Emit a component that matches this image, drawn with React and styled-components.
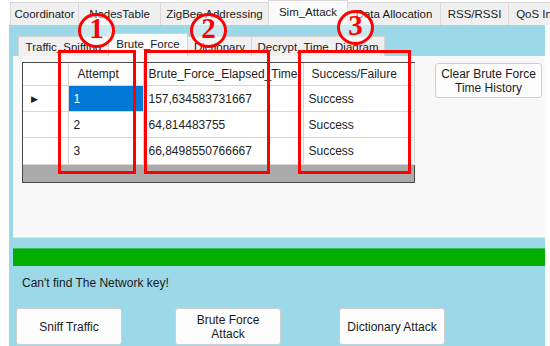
import React from "react";
import styled, { createGlobalStyle } from "styled-components";

const GlobalStyle = createGlobalStyle`
  body {
    margin: 0;
    background: #ffffff;
    font-family: "Liberation Sans", Arial, sans-serif;
    color: #1a1a1a;
  }
`;

const Screen = styled.div`
  position: relative;
  width: 550px;
  height: 346px;
  overflow: hidden;
  background: #ffffff;
`;

const TopTabs = styled.div`
  display: flex;
  align-items: flex-end;
  height: 25px;
  padding-left: 10px;
`;

const TopTab = styled.div`
  box-sizing: border-box;
  flex: none;
  width: ${(p) => p.$w}px;
  height: ${(p) => (p.$active ? 25 : 23)}px;
  display: flex;
  align-items: center;
  justify-content: center;
  padding-bottom: ${(p) => (p.$active ? 3 : 0)}px;
  font-size: 11.5px;
  white-space: nowrap;
  overflow: hidden;
  background: ${(p) => (p.$active ? "#fbfbfb" : "#f0f0f0")};
  border: 1px solid #d9d9d9;
  border-bottom: none;
  margin-right: -1px;
`;

const Page = styled.div`
  margin-left: 9px;
  width: 536px;
  height: 321px;
  box-sizing: border-box;
  padding-left: 4px;
  background: #9bd8e8;
  display: flex;
  flex-direction: column;
`;

const InnerTabs = styled.div`
  display: flex;
  align-items: flex-end;
  height: 31px;
  padding-left: 5px;
`;

const InnerTab = styled.div`
  box-sizing: border-box;
  flex: none;
  width: ${(p) => p.$w}px;
  height: ${(p) => (p.$active ? 23 : 20)}px;
  display: flex;
  align-items: center;
  justify-content: center;
  padding-bottom: ${(p) => (p.$active ? 2 : 0)}px;
  font-size: 11.5px;
  white-space: nowrap;
  background: ${(p) => (p.$active ? "#fbfbfb" : "#f0f0f0")};
  border: 1px solid #d4d4d4;
  border-bottom: none;
  margin-right: -1px;
`;

const TabPage = styled.div`
  box-sizing: border-box;
  height: 182px;
  background: #f8f8f8;
  padding: 6px 0 0 9px;
  display: flex;
  align-items: flex-start;
  border-bottom: 1px solid #e4e4e4;
`;

const Grid = styled.div`
  box-sizing: border-box;
  width: 393px;
  height: 121px;
  border: 1px solid #4a4a4a;
  background: #ababab;
`;

const Table = styled.table`
  border-collapse: collapse;
  table-layout: fixed;
  width: 391px;
  font-size: 12px;
`;

const HeadCell = styled.th`
  height: 22px;
  padding: 0 0 0 ${(p) => p.$pad || 5}px;
  text-align: left;
  font-weight: normal;
  background: #ffffff;
  border-right: 1px solid #d6d6d6;
  border-bottom: 1px solid #d6d6d6;
  white-space: nowrap;
  overflow: hidden;
  color: #222;
`;

const Cell = styled.td`
  height: ${(p) => p.$h || 25}px;
  padding: 0 0 0 5px;
  background: ${(p) => (p.$selected ? "#0078d7" : "#ffffff")};
  color: ${(p) => (p.$selected ? "#ffffff" : "#222")};
  border-right: 1px solid #d6d6d6;
  border-bottom: 1px solid #d6d6d6;
  white-space: nowrap;
  overflow: hidden;
`;

const RowHead = styled.td`
  height: ${(p) => p.$h || 25}px;
  padding: 0 0 0 8px;
  background: #ffffff;
  border-right: 1px solid #d6d6d6;
  border-bottom: 1px solid #d6d6d6;
  font-size: 9px;
  color: #222;
`;

const WinButton = styled.button`
  box-sizing: border-box;
  flex: none;
  width: ${(p) => p.$w || 106}px;
  height: ${(p) => p.$h || 37}px;
  margin: ${(p) => p.$m || "0"};
  padding: 0 4px;
  background: #fdfdfd;
  border: 1px solid #cfcfcf;
  border-radius: 3px;
  font-family: "Liberation Sans", Arial, sans-serif;
  font-size: 12px;
  line-height: 14px;
  color: #1a1a1a;
  text-align: center;
`;

const ProgressBar = styled.div`
  margin-top: 10px;
  height: 18px;
  background: #00af00;
  border-top: 1px solid #3cc45a;
  box-sizing: border-box;
`;

const Status = styled.div`
  font-size: 12px;
  margin: 10px 0 0 9px;
  height: 14px;
`;

const ButtonRow = styled.div`
  display: flex;
  margin-top: 18px;
  padding-left: 3px;
`;

const Mark = styled.div`
  position: absolute;
  box-sizing: border-box;
  border: 3px solid #f00;
`;

const Box = styled(Mark)`
  left: ${(p) => p.$x}px;
  top: 50px;
  width: ${(p) => p.$w}px;
  height: 124px;
`;

const Circle = styled(Mark)`
  left: ${(p) => p.$x}px;
  top: ${(p) => p.$y}px;
  width: 37px;
  height: 35px;
  border-radius: 50%;
  background: rgba(255, 255, 255, 0.45);
  display: flex;
  align-items: center;
  justify-content: center;
  font-family: "Liberation Serif", "Times New Roman", serif;
  font-weight: bold;
  font-size: 29px;
  line-height: 1;
  color: #f00;
  padding-bottom: 4px;
`;

const topTabs = [
  ["Coordinator", 69],
  ["NodesTable", 83],
  ["ZigBee Addressing", 109],
  ["Sim_Attack", 80, true],
  ["Data Allocation", 94],
  ["RSS/RSSI", 69],
  ["QoS Information", 100],
];

const innerTabs = [
  ["Traffic_Sniffing", 91],
  ["Brute_Force", 80, true],
  ["Dictionary", 65],
  ["Decrypt_Time_Diagram", 134],
];

const rows = [
  ["1", "157,634583731667", "Success", 25],
  ["2", "64,814483755", "Success", 25],
  ["3", "66,8498550766667", "Success", 26],
];

export default function App() {
  return (
    <>
      <GlobalStyle />
      <Screen>
        <TopTabs>
          {topTabs.map(([label, w, active]) => (
            <TopTab key={label} $w={w} $active={active}>
              {label}
            </TopTab>
          ))}
        </TopTabs>
        <Page>
          <InnerTabs>
            {innerTabs.map(([label, w, active]) => (
              <InnerTab key={label} $w={w} $active={active}>
                {label}
              </InnerTab>
            ))}
          </InnerTabs>
          <TabPage>
            <Grid>
              <Table>
                <colgroup>
                  <col style={{ width: 45 }} />
                  <col style={{ width: 75 }} />
                  <col style={{ width: 160 }} />
                  <col style={{ width: 111 }} />
                </colgroup>
                <thead>
                  <tr>
                    <HeadCell />
                    <HeadCell $pad={9}>Attempt</HeadCell>
                    <HeadCell $pad={5}>Brute_Force_Elapsed_Time</HeadCell>
                    <HeadCell $pad={8}>Success/Failure</HeadCell>
                  </tr>
                </thead>
                <tbody>
                  {rows.map(([n, t, s, h], i) => (
                    <tr key={n}>
                      <RowHead $h={h}>{i === 0 ? "▶" : ""}</RowHead>
                      <Cell $h={h} $selected={i === 0}>
                        {n}
                      </Cell>
                      <Cell $h={h}>{t}</Cell>
                      <Cell $h={h}>{s}</Cell>
                    </tr>
                  ))}
                </tbody>
              </Table>
            </Grid>
            <WinButton $w={107} $h={35} $m="1px 0 0 20px">
              Clear Brute Force
              <br />
              Time History
            </WinButton>
          </TabPage>
          <ProgressBar />
          <Status>Can't find The Network key!</Status>
          <ButtonRow>
            <WinButton $w={106} $m="0 53px 0 0">
              Sniff Traffic
            </WinButton>
            <WinButton $w={106} $m="0 58px 0 0">
              Brute Force
              <br />
              Attack
            </WinButton>
            <WinButton $w={106}>Dictionary Attack</WinButton>
          </ButtonRow>
        </Page>

        <Box $x={58} $w={78} />
        <Box $x={144} $w={126} />
        <Box $x={298} $w={113} />
        <Circle $x={78} $y={13}>1</Circle>
        <Circle $x={190} $y={13}>2</Circle>
        <Circle $x={337} $y={10}>3</Circle>
      </Screen>
    </>
  );
}
